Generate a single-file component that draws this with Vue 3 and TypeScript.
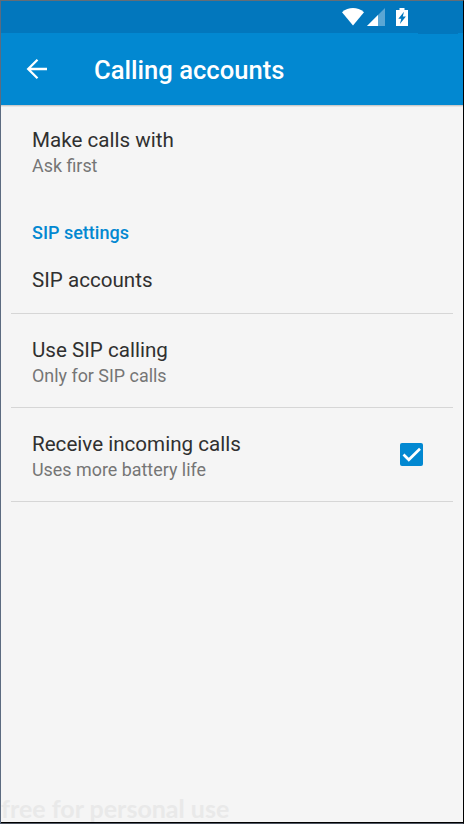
<script setup lang="ts">
import { ref } from 'vue'

const receiveCalls = ref<boolean>(true)
</script>

<template>
  <main class="screen">
    <div class="status">
      <svg class="wifi" viewBox="0 0 24 19" width="24" height="19">
        <path d="M1 5.2C7.500-.4 16.500-.4 23 5.200L12 18.500z" fill="#fff" />
      </svg>
      <svg class="signal" viewBox="0 0 18 18" width="18" height="18">
        <path d="M0 18L18 0V18z" fill="#fff" fill-opacity=".35" />
        <path d="M0 18L11 7V18z" fill="#fff" />
      </svg>
      <svg class="battery" viewBox="0 0 12 18" width="12" height="18">
        <path d="M3.500 0h5v2H12v16H0V2h3.500z" fill="#fff" />
        <path d="M8 3.800L2.300 10.800h3L3.900 16 9.900 8.600H6.800z" fill="#0277bd" />
      </svg>
    </div>
    <header class="bar">
      <svg class="back" viewBox="0 0 22 22" width="22" height="22">
        <path d="M21 11H2.500M11.500 1.700L2.200 11l9.300 9.300" fill="none" stroke="#fff" stroke-width="2.300" />
      </svg>
      <h1>Calling accounts</h1>
    </header>
    <section class="list">
      <div class="row first">
        <div class="name">Make calls with</div>
        <div class="note">Ask first</div>
      </div>
      <h2>SIP settings</h2>
      <div class="row single">
        <div class="name">SIP accounts</div>
      </div>
      <div class="row">
        <div class="name">Use SIP calling</div>
        <div class="note">Only for SIP calls</div>
      </div>
      <div class="row toggle" @click="receiveCalls = !receiveCalls">
        <div>
          <div class="name">Receive incoming calls</div>
          <div class="note">Uses more battery life</div>
        </div>
        <svg class="check" viewBox="0 0 23 23" width="23" height="23">
          <rect width="23" height="23" rx="2" fill="#0288d1" />
          <path v-if="receiveCalls" d="M3.500 11.500l5.300 5.300L20 5.700" fill="none" stroke="#fff" stroke-width="2.700" />
        </svg>
      </div>
    </section>
    <footer>free for personal use</footer>
  </main>
</template>

<style>
body {
  margin: 0;
}
</style>

<style scoped>
.screen {
  box-sizing: border-box;
  width: 464px;
  height: 824px;
  display: flex;
  flex-direction: column;
  overflow: hidden;
  border-top: 1px solid #656d76;
  border-left: 1px solid #5c6b80;
  border-right: 1px solid #000;
  border-bottom: 1px solid #4e5561;
  background: #f5f5f5;
  box-shadow: inset 0 -1px #000;
  font-family: Roboto, sans-serif;
}
.status {
  height: 32px;
  flex: none;
  display: flex;
  align-items: flex-start;
  padding-left: 340px;
  background: #0277bd;
}
.wifi {
  margin-top: 6px;
}
.signal {
  margin: 7px 0 0 2px;
}
.battery {
  margin: 7px 0 0 11px;
}
.bar {
  height: 72px;
  flex: none;
  display: flex;
  align-items: center;
  padding-left: 25px;
  background: linear-gradient(#0277bd, #0277bd) 417px 0 / 40px 1px no-repeat #0288d1;
  box-shadow: 0 1px #cbcbcb, 0 2px #e5e5e5;
}
h1 {
  margin: 1px 0 0 46px;
  font-size: 25.6px;
  font-weight: 500;
  line-height: 32px;
  color: #fff;
  white-space: nowrap;
}
.list {
  padding: 0 10px;
}
.row {
  box-sizing: border-box;
  height: 94px;
  padding: 23px 21px 0;
  border-bottom: 1px solid #d6d6d6;
}
.first {
  border: 0;
  height: 107px;
  padding-top: 22px;
}
.single {
  height: 61px;
  padding-top: 14px;
}
.name {
  font-size: 20.6px;
  line-height: 26px;
  color: #303030;
  white-space: nowrap;
}
.note {
  font-size: 17.900px;
  line-height: 26px;
  color: #757575;
  white-space: nowrap;
}
h2 {
  margin: 0;
  padding: 8px 21px 0;
  height: 33px;
  box-sizing: border-box;
  font-size: 18px;
  font-weight: 500;
  line-height: 26px;
  color: #0288d1;
}
h2 + .single {
  margin-top: 8px;
}
.toggle {
  display: flex;
  justify-content: space-between;
}
.check {
  margin: 12px 9px 0 0;
}
footer {
  margin-top: auto;
  padding-bottom: 2px;
  font: 700 25px/26px Lato, sans-serif;
  color: #e9e9e9;
}
</style>
